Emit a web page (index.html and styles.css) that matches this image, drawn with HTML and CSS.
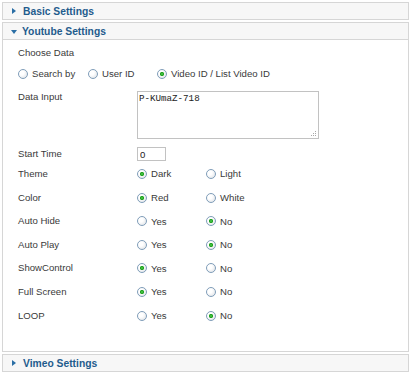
FILE: index.html
```html
<!DOCTYPE html>
<html lang="en">
<head>
    <meta charset="UTF-8">
    <title>Youtube Settings</title>
    <link rel="stylesheet" href="styles.css">
</head>
<body>

    <div class="panel">
        <div class="panel-head"><span class="arrow-right"></span>Basic Settings</div>
    </div>

    <div class="panel">
        <div class="panel-head"><span class="arrow-down"></span>Youtube Settings</div>
        <div class="panel-body">
            <div class="choose-label">Choose Data</div>
            <div class="choose-row">
                <label class="opt first"><input type="radio" name="source">Search by</label>
                <label class="opt"><input type="radio" name="source">User ID</label>
                <label class="opt wide"><input type="radio" name="source" checked>Video ID / List Video ID</label>
            </div>

            <div class="field data-row">
                <span class="field-label">Data Input</span>
                <div class="textarea-wrap">
                    <textarea>P-KUmaZ-718</textarea>
                    <svg class="grip" width="6" height="6" viewBox="0 0 6 6">
                        <rect x="4" y="0" width="1" height="1" />
                        <rect x="2" y="2" width="1" height="1" />
                        <rect x="4" y="2" width="1" height="1" />
                        <rect x="0" y="4" width="1" height="1" />
                        <rect x="2" y="4" width="1" height="1" />
                        <rect x="4" y="4" width="1" height="1" />
                    </svg>
                </div>
            </div>

            <div class="field start-row">
                <span class="field-label">Start Time</span>
                <input type="text" class="start-input" value="0">
            </div>

            <div class="field opt-row">
                <span class="field-label">Theme</span>
                <label class="opt"><input type="radio" name="theme" checked>Dark</label>
                <label class="opt"><input type="radio" name="theme">Light</label>
            </div>
            <div class="field opt-row">
                <span class="field-label">Color</span>
                <label class="opt"><input type="radio" name="color" checked>Red</label>
                <label class="opt"><input type="radio" name="color">White</label>
            </div>
            <div class="field opt-row">
                <span class="field-label">Auto Hide</span>
                <label class="opt"><input type="radio" name="autohide">Yes</label>
                <label class="opt"><input type="radio" name="autohide" checked>No</label>
            </div>
            <div class="field opt-row">
                <span class="field-label">Auto Play</span>
                <label class="opt"><input type="radio" name="autoplay">Yes</label>
                <label class="opt"><input type="radio" name="autoplay" checked>No</label>
            </div>
            <div class="field opt-row">
                <span class="field-label">ShowControl</span>
                <label class="opt"><input type="radio" name="controls" checked>Yes</label>
                <label class="opt"><input type="radio" name="controls">No</label>
            </div>
            <div class="field opt-row">
                <span class="field-label">Full Screen</span>
                <label class="opt"><input type="radio" name="fullscreen" checked>Yes</label>
                <label class="opt"><input type="radio" name="fullscreen">No</label>
            </div>
            <div class="field opt-row">
                <span class="field-label">LOOP</span>
                <label class="opt"><input type="radio" name="loop">Yes</label>
                <label class="opt"><input type="radio" name="loop" checked>No</label>
            </div>
        </div>
    </div>

    <div class="panel">
        <div class="panel-head"><span class="arrow-right"></span>Vimeo Settings</div>
    </div>

</body>
</html>
```

FILE: styles.css
```css
* {
    box-sizing: border-box;
    margin: 0;
    padding: 0;
}

body {
    font-family: "Liberation Sans", Arial, sans-serif;
    font-size: 9.6px;
    color: #3a3a3a;
    background-color: white;
    padding: 2px 0 0 2px;
}

.panel {
    width: 407px;
    margin-bottom: 2px;
}

.panel-head {
    display: flex;
    align-items: center;
    height: 18px;
    padding-left: 9px;
    background-color: #f7f7f7;
    border: 1px solid #d6d6d6;
    color: #1f5c8d;
    font-weight: bold;
    font-size: 10.3px;
}

.arrow-right {
    width: 0;
    height: 0;
    border-left: 4px solid #2a6ea5;
    border-top: 3px solid transparent;
    border-bottom: 3px solid transparent;
    margin-right: 7px;
}

.arrow-down {
    width: 0;
    height: 0;
    border-top: 4px solid #2a6ea5;
    border-left: 3px solid transparent;
    border-right: 3px solid transparent;
    margin: 1px 5px 0 -1px;
}

.panel-body {
    border: 1px solid #d6d6d6;
    border-top: none;
    padding: 0 0 24px 15px;
}

.choose-label {
    height: 25px;
    line-height: 25px;
}

.choose-row {
    display: flex;
    align-items: center;
    height: 17px;
}

.opt {
    display: flex;
    align-items: center;
    width: 69px;
    flex: none;
}

.opt.first {
    width: 70px;
}

.opt.wide {
    width: auto;
}

.opt input[type="radio"] {
    appearance: none;
    -webkit-appearance: none;
    width: 10px;
    height: 10px;
    flex: none;
    margin-right: 4px;
    border: 1px solid #7f9db9;
    border-radius: 50%;
    background: radial-gradient(circle at 35% 35%, #ffffff 30%, #d9dde2 100%);
}

.opt input[type="radio"]:checked {
    background:
        radial-gradient(circle at 50% 50%, #52cf52 0, #1e9e1e 1.8px, transparent 2.4px),
        radial-gradient(circle at 35% 35%, #ffffff 30%, #d9dde2 100%);
}

.field {
    display: flex;
}

.field-label {
    width: 119px;
    flex: none;
    line-height: 14px;
}

.data-row {
    align-items: flex-start;
    padding-top: 8px;
}

.textarea-wrap {
    position: relative;
    margin-top: 1px;
}

.textarea-wrap textarea {
    display: block;
    width: 182px;
    height: 48px;
    border: 1px solid #c2c2c2;
    padding: 2px 1px;
    font-family: "Liberation Mono", "Courier New", monospace;
    font-size: 9.2px;
    line-height: 10px;
    color: #222;
    resize: none;
    outline: none;
}

.grip {
    position: absolute;
    right: 2px;
    bottom: 2px;
    fill: #a8a8a8;
}

.start-row {
    align-items: center;
    height: 14px;
    margin-top: 8px;
    margin-bottom: 1.2px;
}

.start-input {
    width: 29px;
    height: 14px;
    border: 1px solid #c2c2c2;
    padding: 0 2px;
    font-family: "Liberation Sans", Arial, sans-serif;
    font-size: 9.6px;
    color: #222;
    outline: none;
}

.opt-row {
    align-items: center;
    height: 23.6px;
}
```
